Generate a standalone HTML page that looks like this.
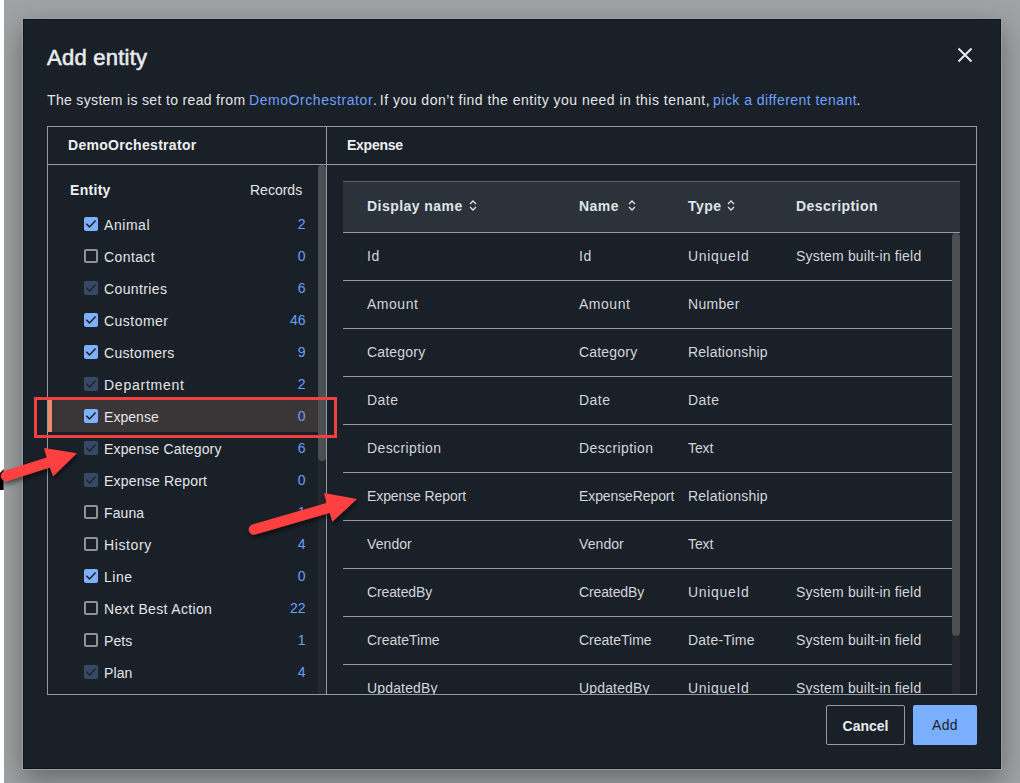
<!DOCTYPE html>
<html><head><meta charset="utf-8">
<style>
*{box-sizing:border-box;margin:0;padding:0}
html,body{width:1020px;height:783px;overflow:hidden}
body{position:relative;background:#a0a3a3;font-family:"Liberation Sans",sans-serif;color:#e3e5e8}
.strip{position:absolute;left:0;top:0;width:4px;height:783px;background:#fff}
.dlg{position:absolute;left:22px;top:18px;width:980px;height:752px;background:#1a2027;border:1px solid #97a1ab;box-shadow:inset 0 0 0 1px #10141a,0 10px 26px 0 rgba(0,0,0,.36)}
.abs{position:absolute;white-space:nowrap}
.title{left:47px;top:45px;font-size:22px;letter-spacing:0.25px;font-weight:normal;-webkit-text-stroke:0.6px #e8eaed;color:#e8eaed}
.desc{top:92px;font-size:14px;color:#e3e5e8}
a{color:#7ea8ff;text-decoration:none}
.panel{position:absolute;left:47px;top:126px;width:930px;height:569px;border:1px solid #8f9aa5}
.vdiv{position:absolute;left:326px;top:126px;width:1px;height:569px;background:#8f9aa5}
.hdiv{position:absolute;left:47px;top:164px;width:930px;height:1px;background:#8f9aa5}
.ph{font-size:14px;font-weight:bold;letter-spacing:0.3px;color:#eef0f2}
.cb{position:absolute;left:84px;width:14px;height:14px;border-radius:2px}
.cb.on{background:#7db0ff}
.cb.off{border:2px solid #8e9297}
.cb.dis{background:#364a68}
.cb svg{position:absolute;left:0;top:0}
.ent{left:104px;font-size:14px;letter-spacing:0.35px;color:#e3e5e8}
.cnt{right:714.4px;font-size:14px;color:#68a0ff;text-align:right}
.sel{position:absolute;left:48px;top:400px;width:270px;height:32px;background:#3a3638}
.selbar{position:absolute;left:48px;top:400px;width:4px;height:32px;background:#ee8a6a}
.redbox{position:absolute;left:34px;top:397px;width:303px;height:41px;border:3px solid #f04040}
.lsb-track{position:absolute;left:318px;top:165px;width:8px;height:529px;background:#24272d}
.lsb-thumb{position:absolute;left:318px;top:165px;width:8px;height:296px;background:#4b4f52;border-radius:4px}
.thead{position:absolute;left:343px;top:181px;width:617px;height:52px;background:#2c3239;border-top:1px solid #5a6168;border-bottom:1px solid #8f9aa5}
.hline{position:absolute;left:343px;width:609px;height:1px;background:#8f9aa5}
.th{font-size:14px;font-weight:bold;letter-spacing:0.45px;color:#dfe4ea}
.td{font-size:14px;letter-spacing:0.3px;color:#d3d6da}
.tsb-track{position:absolute;left:952px;top:233px;width:8px;height:461px;background:#24272d}
.tsb-thumb{position:absolute;left:952px;top:233px;width:8px;height:403px;background:#4b4f52;border-radius:4px}
.btn{position:absolute;top:705px;height:40px;padding-top:2px;font-size:14px;font-weight:bold;display:flex;align-items:center;justify-content:center;border-radius:2px}
.cancel{left:826px;width:79px;border:1px solid #8f9aa5;color:#e8eaed}
.add{left:913px;width:64px;background:#7aaeff;color:#1b1f26;font-weight:normal;padding-top:0;letter-spacing:0.3px}
</style></head>
<body>
<div class="dlg"></div>
<div class="strip"></div>
<div class="abs title">Add entity</div>
<svg class="abs" style="left:957px;top:47px" width="16" height="16" viewBox="0 0 16 16"><path d="M1.5 1.5L14.5 14.5M14.5 1.5L1.5 14.5" stroke="#e8eaed" stroke-width="2" fill="none"/></svg>
<div class="abs desc" style="left:47px;letter-spacing:0.34px">The system is set to read from</div>
<div class="abs desc" style="left:249px;letter-spacing:0.56px;color:#6ea0ff">DemoOrchestrator</div>
<div class="abs desc" style="left:373px">.</div>
<div class="abs desc" style="left:379.8px;letter-spacing:0.49px">If you don’t find the entity you need in this tenant,</div>
<div class="abs desc" style="left:713.1px;letter-spacing:0.45px;color:#6ea0ff">pick a different tenant</div>
<div class="abs desc" style="left:856.5px">.</div>
<div class="panel"></div>
<div class="vdiv"></div>
<div class="hdiv"></div>
<div class="abs ph" style="left:68px;top:137px">DemoOrchestrator</div>
<div class="abs ph" style="left:347px;top:137px;letter-spacing:-0.25px">Expense</div>

<!-- left list -->
<div class="lsb-track"></div>
<div class="lsb-thumb"></div>
<div class="sel"></div>
<div class="selbar"></div>
<div class="abs ph" style="left:70px;top:182px">Entity</div>
<div class="abs" style="left:250px;top:182px;font-size:14px;color:#e3e5e8">Records</div>
<div class="cb on" style="top:217px"><svg width="14" height="14" viewBox="0 0 14 14"><path d="M2.3 6.7L5.5 9.9L11.6 3.6" stroke="#1b1f26" stroke-width="1.5" fill="none"/></svg></div>
<div class="abs ent" style="top:217px;letter-spacing:0.55px">Animal</div>
<div class="abs cnt" style="top:216px">2</div>
<div class="cb off" style="top:249px"></div>
<div class="abs ent" style="top:249px;letter-spacing:0.4px">Contact</div>
<div class="abs cnt" style="top:248px">0</div>
<div class="cb dis" style="top:281px"><svg width="14" height="14" viewBox="0 0 14 14"><path d="M2.3 6.7L5.5 9.9L11.6 3.6" stroke="#1d232c" stroke-width="1.5" fill="none"/></svg></div>
<div class="abs ent" style="top:281px;letter-spacing:0.38px">Countries</div>
<div class="abs cnt" style="top:280px">6</div>
<div class="cb on" style="top:313px"><svg width="14" height="14" viewBox="0 0 14 14"><path d="M2.3 6.7L5.5 9.9L11.6 3.6" stroke="#1b1f26" stroke-width="1.5" fill="none"/></svg></div>
<div class="abs ent" style="top:313px;letter-spacing:0.47px">Customer</div>
<div class="abs cnt" style="top:312px">46</div>
<div class="cb on" style="top:345px"><svg width="14" height="14" viewBox="0 0 14 14"><path d="M2.3 6.7L5.5 9.9L11.6 3.6" stroke="#1b1f26" stroke-width="1.5" fill="none"/></svg></div>
<div class="abs ent" style="top:345px;letter-spacing:0.32px">Customers</div>
<div class="abs cnt" style="top:344px">9</div>
<div class="cb dis" style="top:377px"><svg width="14" height="14" viewBox="0 0 14 14"><path d="M2.3 6.7L5.5 9.9L11.6 3.6" stroke="#1d232c" stroke-width="1.5" fill="none"/></svg></div>
<div class="abs ent" style="top:377px;letter-spacing:0.75px">Department</div>
<div class="abs cnt" style="top:376px">2</div>
<div class="cb on" style="top:409px"><svg width="14" height="14" viewBox="0 0 14 14"><path d="M2.3 6.7L5.5 9.9L11.6 3.6" stroke="#1b1f26" stroke-width="1.5" fill="none"/></svg></div>
<div class="abs ent" style="top:409px;letter-spacing:0.05px">Expense</div>
<div class="abs cnt" style="top:408px">0</div>
<div class="cb dis" style="top:441px"><svg width="14" height="14" viewBox="0 0 14 14"><path d="M2.3 6.7L5.5 9.9L11.6 3.6" stroke="#1d232c" stroke-width="1.5" fill="none"/></svg></div>
<div class="abs ent" style="top:441px;letter-spacing:0.15px">Expense Category</div>
<div class="abs cnt" style="top:440px">6</div>
<div class="cb dis" style="top:473px"><svg width="14" height="14" viewBox="0 0 14 14"><path d="M2.3 6.7L5.5 9.9L11.6 3.6" stroke="#1d232c" stroke-width="1.5" fill="none"/></svg></div>
<div class="abs ent" style="top:473px;letter-spacing:0.2px">Expense Report</div>
<div class="abs cnt" style="top:472px">0</div>
<div class="cb off" style="top:505px"></div>
<div class="abs ent" style="top:505px;letter-spacing:0.1px">Fauna</div>
<div class="abs cnt" style="top:504px">1</div>
<div class="cb off" style="top:537px"></div>
<div class="abs ent" style="top:537px;letter-spacing:0.6px">History</div>
<div class="abs cnt" style="top:536px">4</div>
<div class="cb on" style="top:569px"><svg width="14" height="14" viewBox="0 0 14 14"><path d="M2.3 6.7L5.5 9.9L11.6 3.6" stroke="#1b1f26" stroke-width="1.5" fill="none"/></svg></div>
<div class="abs ent" style="top:569px;letter-spacing:0.5px">Line</div>
<div class="abs cnt" style="top:568px">0</div>
<div class="cb off" style="top:601px"></div>
<div class="abs ent" style="top:601px;letter-spacing:0.34px">Next Best Action</div>
<div class="abs cnt" style="top:600px">22</div>
<div class="cb off" style="top:633px"></div>
<div class="abs ent" style="top:633px;letter-spacing:0.05px">Pets</div>
<div class="abs cnt" style="top:632px">1</div>
<div class="cb dis" style="top:665px"><svg width="14" height="14" viewBox="0 0 14 14"><path d="M2.3 6.7L5.5 9.9L11.6 3.6" stroke="#1d232c" stroke-width="1.5" fill="none"/></svg></div>
<div class="abs ent" style="top:665px;letter-spacing:0.1px">Plan</div>
<div class="abs cnt" style="top:664px">4</div>

<!-- table -->
<div class="thead"></div>
<div style="position:absolute;left:0;top:0;width:1020px;height:694px;overflow:hidden"><div class="abs th" style="left:367px;top:198px">Display name</div>
<div class="abs" style="left:469px;top:200px;line-height:0"><svg width="8" height="11" viewBox="0 0 8 11"><path d="M1 4L4 1L7 4M1 7L4 10L7 7" stroke="#dfe4ea" stroke-width="1.3" fill="none"/></svg></div>
<div class="abs th" style="left:579px;top:198px">Name</div>
<div class="abs" style="left:628px;top:200px;line-height:0"><svg width="8" height="11" viewBox="0 0 8 11"><path d="M1 4L4 1L7 4M1 7L4 10L7 7" stroke="#dfe4ea" stroke-width="1.3" fill="none"/></svg></div>
<div class="abs th" style="left:688px;top:198px">Type</div>
<div class="abs" style="left:727px;top:200px;line-height:0"><svg width="8" height="11" viewBox="0 0 8 11"><path d="M1 4L4 1L7 4M1 7L4 10L7 7" stroke="#dfe4ea" stroke-width="1.3" fill="none"/></svg></div>
<div class="abs th" style="left:796px;top:198px">Description</div>
<div class="abs td" style="left:367px;top:248px;letter-spacing:0.5px">Id</div>
<div class="abs td" style="left:579px;top:248px;letter-spacing:0.5px">Id</div>
<div class="abs td" style="left:688px;top:248px;letter-spacing:0.69px">UniqueId</div>
<div class="abs td" style="left:796px;top:248px;letter-spacing:0.19px">System built-in field</div>
<div class="hline" style="top:280px"></div>
<div class="abs td" style="left:367px;top:296px;letter-spacing:0.52px">Amount</div>
<div class="abs td" style="left:579px;top:296px;letter-spacing:0.52px">Amount</div>
<div class="abs td" style="left:688px;top:296px;letter-spacing:0.3px">Number</div>
<div class="hline" style="top:328px"></div>
<div class="abs td" style="left:367px;top:344px;letter-spacing:0.19px">Category</div>
<div class="abs td" style="left:579px;top:344px;letter-spacing:0.19px">Category</div>
<div class="abs td" style="left:688px;top:344px;letter-spacing:0.23px">Relationship</div>
<div class="hline" style="top:376px"></div>
<div class="abs td" style="left:367px;top:392px;letter-spacing:0.47px">Date</div>
<div class="abs td" style="left:579px;top:392px;letter-spacing:0.47px">Date</div>
<div class="abs td" style="left:688px;top:392px;letter-spacing:0.47px">Date</div>
<div class="hline" style="top:424px"></div>
<div class="abs td" style="left:367px;top:440px;letter-spacing:0.4px">Description</div>
<div class="abs td" style="left:579px;top:440px;letter-spacing:0.4px">Description</div>
<div class="abs td" style="left:688px;top:440px;letter-spacing:-0.1px">Text</div>
<div class="hline" style="top:472px"></div>
<div class="abs td" style="left:367px;top:488px;letter-spacing:-0.1px">Expense Report</div>
<div class="abs td" style="left:579px;top:488px;letter-spacing:-0.1px">ExpenseReport</div>
<div class="abs td" style="left:688px;top:488px;letter-spacing:0.23px">Relationship</div>
<div class="hline" style="top:520px"></div>
<div class="abs td" style="left:367px;top:536px;letter-spacing:0.08px">Vendor</div>
<div class="abs td" style="left:579px;top:536px;letter-spacing:0.08px">Vendor</div>
<div class="abs td" style="left:688px;top:536px;letter-spacing:-0.1px">Text</div>
<div class="hline" style="top:568px"></div>
<div class="abs td" style="left:367px;top:584px;letter-spacing:-0.12px">CreatedBy</div>
<div class="abs td" style="left:579px;top:584px;letter-spacing:-0.12px">CreatedBy</div>
<div class="abs td" style="left:688px;top:584px;letter-spacing:0.69px">UniqueId</div>
<div class="abs td" style="left:796px;top:584px;letter-spacing:0.19px">System built-in field</div>
<div class="hline" style="top:616px"></div>
<div class="abs td" style="left:367px;top:632px;letter-spacing:0.0px">CreateTime</div>
<div class="abs td" style="left:579px;top:632px;letter-spacing:0.0px">CreateTime</div>
<div class="abs td" style="left:688px;top:632px;letter-spacing:0.21px">Date-Time</div>
<div class="abs td" style="left:796px;top:632px;letter-spacing:0.19px">System built-in field</div>
<div class="hline" style="top:664px"></div>
<div class="abs td" style="left:367px;top:680px;letter-spacing:0.16px">UpdatedBy</div>
<div class="abs td" style="left:579px;top:680px;letter-spacing:0.16px">UpdatedBy</div>
<div class="abs td" style="left:688px;top:680px;letter-spacing:0.69px">UniqueId</div>
<div class="abs td" style="left:796px;top:680px;letter-spacing:0.19px">System built-in field</div></div>
<div class="tsb-track"></div>
<div class="tsb-thumb"></div>

<div class="redbox"></div>

<svg class="abs" style="left:0;top:0;overflow:visible" width="1020" height="783">
<defs><filter id="sh" x="-20%" y="-20%" width="140%" height="160%"><feDropShadow dx="1" dy="3" stdDeviation="2.5" flood-color="#000" flood-opacity="0.55"/></filter></defs>
<path d="M0 473 L3.7 469 L3.7 490 L0 490 Z" fill="#000"/>
<g filter="url(#sh)" fill="#ff4040">
<line x1="253.9" y1="529.6" x2="333" y2="506.6" stroke="#ff4040" stroke-width="10.4" stroke-linecap="round"/>
<polygon points="324,493 356.9,499.1 332.4,521.8 329.8,513.2 326.6,502.8"/>
<line x1="6" y1="476" x2="53" y2="461" stroke="#ff4040" stroke-width="10.4" stroke-linecap="round"/>
<polygon points="44,448 76.9,453.2 53.2,476.2 49.8,467.6 46.6,457.2"/>
</g></svg>
<div class="btn cancel">Cancel</div>
<div class="btn add">Add</div>
</body></html>
